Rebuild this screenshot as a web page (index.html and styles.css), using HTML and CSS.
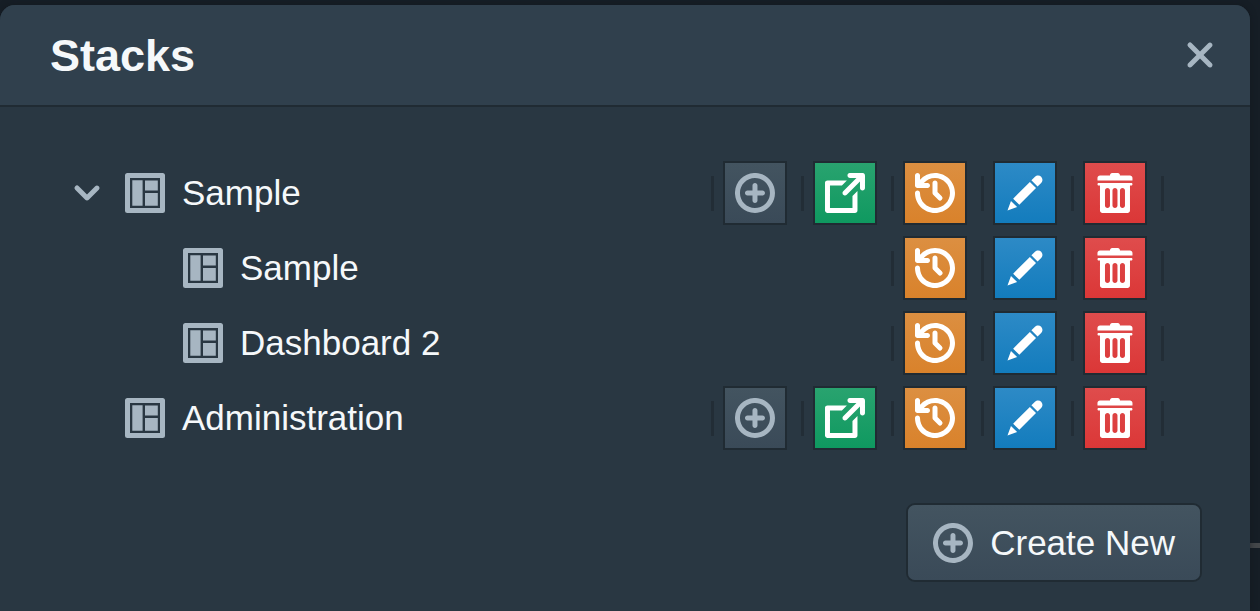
FILE: index.html
```
<!DOCTYPE html>
<html lang="en">
<head>
<meta charset="utf-8">
<title>Stacks</title>
<link rel="stylesheet" href="styles.css">
</head>
<body>
<svg class="sprite" aria-hidden="true">
  <symbol id="add" viewBox="0 0 16 16"><path d="M10.99 6.99h-2v-2c0-.55-.45-1-1-1s-1 .45-1 1v2h-2c-.55 0-1 .45-1 1s.45 1 1 1h2v2c0 .55.45 1 1 1s1-.45 1-1v-2h2c.55 0 1-.45 1-1s-.45-1-1-1zm-3-7c-4.42 0-8 3.58-8 8s3.58 8 8 8 8-3.58 8-8-3.58-8-8-8zm0 14c-3.31 0-6-2.69-6-6s2.69-6 6-6 6 2.69 6 6-2.69 6-6 6z"/></symbol>
  <symbol id="share" viewBox="0 0 16 16"><path d="M10.99 13.99h-9v-9h4.76l2-2H.99c-.55 0-1 .45-1 1v11c0 .55.45 1 1 1h11c.55 0 1-.45 1-1V7.24l-2 2v4.75zm4-14h-5c-.55 0-1 .45-1 1s.45 1 1 1h2.59L7.29 7.28a1 1 0 00-.3.71 1.003 1.003 0 001.71.71l5.29-5.29V6c0 .55.45 1 1 1s1-.45 1-1V1c0-.56-.45-1.01-1-1.01z"/></symbol>
  <symbol id="history" viewBox="0 0 16 16"><path d="M8 3c-.55 0-1 .45-1 1v4c0 .28.11.53.29.71l2 2a1.003 1.003 0 001.42-1.42L9 7.59V4c0-.55-.45-1-1-1zm0-3a7.95 7.95 0 00-6 2.74V1c0-.55-.45-1-1-1s-1 .45-1 1v4c0 .55.45 1 1 1h4c.55 0 1-.45 1-1s-.45-1-1-1H3.54C4.64 2.78 6.23 2 8 2c3.31 0 6 2.69 6 6s-2.69 6-6 6-6-2.69-6-6c0-.55-.45-1-1-1s-1 .45-1 1c0 4.42 3.58 8 8 8s8-3.58 8-8-3.58-8-8-8z"/></symbol>
  <symbol id="edit" viewBox="0 0 16 16"><path d="M3.25 10.26l2.47 2.47 6.69-6.69-2.46-2.48-6.7 6.7zM.99 14.99l3.86-1.39-2.46-2.44L.99 14.99zm12.25-14c-.48 0-.92.2-1.24.51l-1.44 1.44 2.47 2.47 1.44-1.44c.32-.32.51-.75.51-1.24.01-.95-.77-1.74-1.74-1.74z"/></symbol>
  <symbol id="trash" viewBox="0 0 16 16"><path fill-rule="evenodd" d="M14.49 3.99h-13c-.28 0-.5.22-.5.5s.22.5.5.5h.5v10c0 .55.45 1 1 1h10c.55 0 1-.45 1-1v-10h.5c.28 0 .5-.22.5-.5s-.22-.5-.5-.5zm-8.5 9c0 .55-.45 1-1 1s-1-.45-1-1v-6c0-.55.45-1 1-1s1 .45 1 1v6zm3 0c0 .55-.45 1-1 1s-1-.45-1-1v-6c0-.55.45-1 1-1s1 .45 1 1v6zm3 0c0 .55-.45 1-1 1s-1-.45-1-1v-6c0-.55.45-1 1-1s1 .45 1 1v6zm2-12h-4c0-.55-.45-1-1-1h-2c-.55 0-1 .45-1 1h-4c-.55 0-1 .45-1 1v1h14v-1c0-.55-.45-1-1-1z"/></symbol>
  <symbol id="cross" viewBox="0 0 16 16"><path d="M9.41 8l3.29-3.29c.19-.18.3-.43.3-.71a1.003 1.003 0 00-1.71-.71L8 6.59l-3.29-3.3a1.003 1.003 0 00-1.42 1.42L6.59 8 3.3 11.29c-.19.18-.3.43-.3.71a1.003 1.003 0 001.71.71L8 9.41l3.29 3.29c.18.19.43.3.71.3a1.003 1.003 0 00.71-1.71L9.41 8z"/></symbol>
  <symbol id="chevron" viewBox="0 0 16 16"><path d="M12 5c-.28 0-.53.11-.71.29L8 8.59l-3.29-3.3a1.003 1.003 0 00-1.42 1.42l4 4c.18.18.43.29.71.29s.53-.11.71-.29l4-4A1.003 1.003 0 0012 5z"/></symbol>
  <symbol id="board" viewBox="0 0 40 40"><path fill-rule="evenodd" d="M2.500 0h35a2.500 2.500 0 012.500 2.500v35a2.500 2.500 0 01-2.500 2.500h-35A2.500 2.500 0 010 37.500v-35A2.500 2.500 0 012.500 0zM5 5v30h30V5z"/><path d="M7.300 7.200h10.300v25.600H7.300zM20 7.500h12.800v10H20zM20 20h12.800v12.800H20z"/></symbol>
</svg>
<div class="page-line"></div>
<section class="dialog" role="dialog" aria-labelledby="title">
  <header class="dialog-header">
    <h1 class="title" id="title">Stacks</h1>
    <button class="plain" aria-label="Close"><svg class="icon"><use href="#cross"/></svg></button>
  </header>
  <div class="dialog-body">
    <ul class="tree">
      <li class="row">
        <button class="plain caret" aria-label="Collapse"><svg class="icon"><use href="#chevron"/></svg></button>
        <svg class="icon"><use href="#board"/></svg>
        <span class="label">Sample</span>
        <div class="actions">
          <span class="divider"></span><button class="action" aria-label="Add"><svg class="icon"><use href="#add"/></svg></button>
          <span class="divider"></span><button class="action success" aria-label="Open"><svg class="icon"><use href="#share"/></svg></button>
          <span class="divider"></span><button class="action warning" aria-label="History"><svg class="icon"><use href="#history"/></svg></button>
          <span class="divider"></span><button class="action primary" aria-label="Edit"><svg class="icon"><use href="#edit"/></svg></button>
          <span class="divider"></span><button class="action danger" aria-label="Delete"><svg class="icon"><use href="#trash"/></svg></button>
          <span class="divider"></span>
        </div>
      </li>
      <li class="row child">
        <svg class="icon"><use href="#board"/></svg>
        <span class="label">Sample</span>
        <div class="actions">
          <span class="divider"></span><button class="action warning" aria-label="History"><svg class="icon"><use href="#history"/></svg></button>
          <span class="divider"></span><button class="action primary" aria-label="Edit"><svg class="icon"><use href="#edit"/></svg></button>
          <span class="divider"></span><button class="action danger" aria-label="Delete"><svg class="icon"><use href="#trash"/></svg></button>
          <span class="divider"></span>
        </div>
      </li>
      <li class="row child">
        <svg class="icon"><use href="#board"/></svg>
        <span class="label">Dashboard 2</span>
        <div class="actions">
          <span class="divider"></span><button class="action warning" aria-label="History"><svg class="icon"><use href="#history"/></svg></button>
          <span class="divider"></span><button class="action primary" aria-label="Edit"><svg class="icon"><use href="#edit"/></svg></button>
          <span class="divider"></span><button class="action danger" aria-label="Delete"><svg class="icon"><use href="#trash"/></svg></button>
          <span class="divider"></span>
        </div>
      </li>
      <li class="row leaf">
        <svg class="icon"><use href="#board"/></svg>
        <span class="label">Administration</span>
        <div class="actions">
          <span class="divider"></span><button class="action" aria-label="Add"><svg class="icon"><use href="#add"/></svg></button>
          <span class="divider"></span><button class="action success" aria-label="Open"><svg class="icon"><use href="#share"/></svg></button>
          <span class="divider"></span><button class="action warning" aria-label="History"><svg class="icon"><use href="#history"/></svg></button>
          <span class="divider"></span><button class="action primary" aria-label="Edit"><svg class="icon"><use href="#edit"/></svg></button>
          <span class="divider"></span><button class="action danger" aria-label="Delete"><svg class="icon"><use href="#trash"/></svg></button>
          <span class="divider"></span>
        </div>
      </li>
    </ul>
    <footer class="dialog-footer">
      <button class="create"><svg class="icon"><use href="#add"/></svg>Create New</button>
    </footer>
  </div>
</section>
</body>
</html>
```
FILE: styles.css
```
* { box-sizing: border-box; }
body {
  margin: 0;
  background: #161e26;
  color: #f5f8fa;
  font-family: "Liberation Sans", Arial, sans-serif;
  font-size: 35px;
  line-height: 45px;
}
button { border: 0; margin: 0; padding: 0; font: inherit; color: inherit; cursor: pointer; }
.sprite { position: absolute; width: 0; height: 0; }
.page-line {
  position: absolute;
  top: 543px;
  right: 0;
  width: 100%;
  height: 5px;
  background: #44474a;
}
.dialog {
  position: relative;
  margin: 5px 10px 0 0;
  min-height: calc(100vh - 5px);
  border-radius: 15px 15px 0 0;
  background: #293742;
  box-shadow: 0 0 6px rgba(16, 22, 26, 0.6);
}
.dialog-header {
  display: flex;
  align-items: center;
  justify-content: space-between;
  height: 100px;
  padding: 0 30px 0 50px;
  border-radius: 15px 15px 0 0;
  background: #30404d;
  box-shadow: 0 2px 0 #202b33;
}
.title { margin: 0; font-size: 45px; line-height: 51px; font-weight: bold; }
.icon { display: block; flex: none; width: 40px; height: 40px; fill: #a7b6c2; }
.plain { background: none; }
.dialog-body { padding: 58px 50px 30px 67px; }
.tree {
  display: flex;
  flex-direction: column;
  gap: 15px;
  margin: 0;
  padding: 0 36px 0 0;
  list-style: none;
}
.row { display: flex; align-items: center; gap: 17px; height: 60px; }
.caret { margin-right: 1px; }
.leaf { padding-left: 58px; }
.child { padding-left: 116px; }
.label { flex: 1; line-height: 44px; }
.actions { display: flex; align-items: center; }
.divider { width: 3px; height: 35px; margin-left: 16px; background: #222d36; }
.action {
  display: grid;
  place-items: center;
  width: 60px;
  height: 60px;
  margin-left: 11px;
  background: linear-gradient(#435460, #3a4a58);
  box-shadow: 0 0 0 2px #202b33;
}
.success { background: linear-gradient(#29a36f, #0f9960); }
.warning { background: linear-gradient(#dc8f41, #d9822b); }
.primary { background: linear-gradient(#2d8ac6, #137cbd); }
.danger { background: linear-gradient(#df4c4c, #db3737); }
.success .icon, .warning .icon, .primary .icon, .danger .icon { fill: #fff; }
.dialog-footer { display: flex; justify-content: flex-end; padding-top: 57px; }
.create {
  display: flex;
  align-items: center;
  gap: 17px;
  height: 75px;
  padding: 0 25px;
  border-radius: 7px;
  background: linear-gradient(#435460, #3a4a58);
  box-shadow: 0 0 0 2px #202b33;
}
```
